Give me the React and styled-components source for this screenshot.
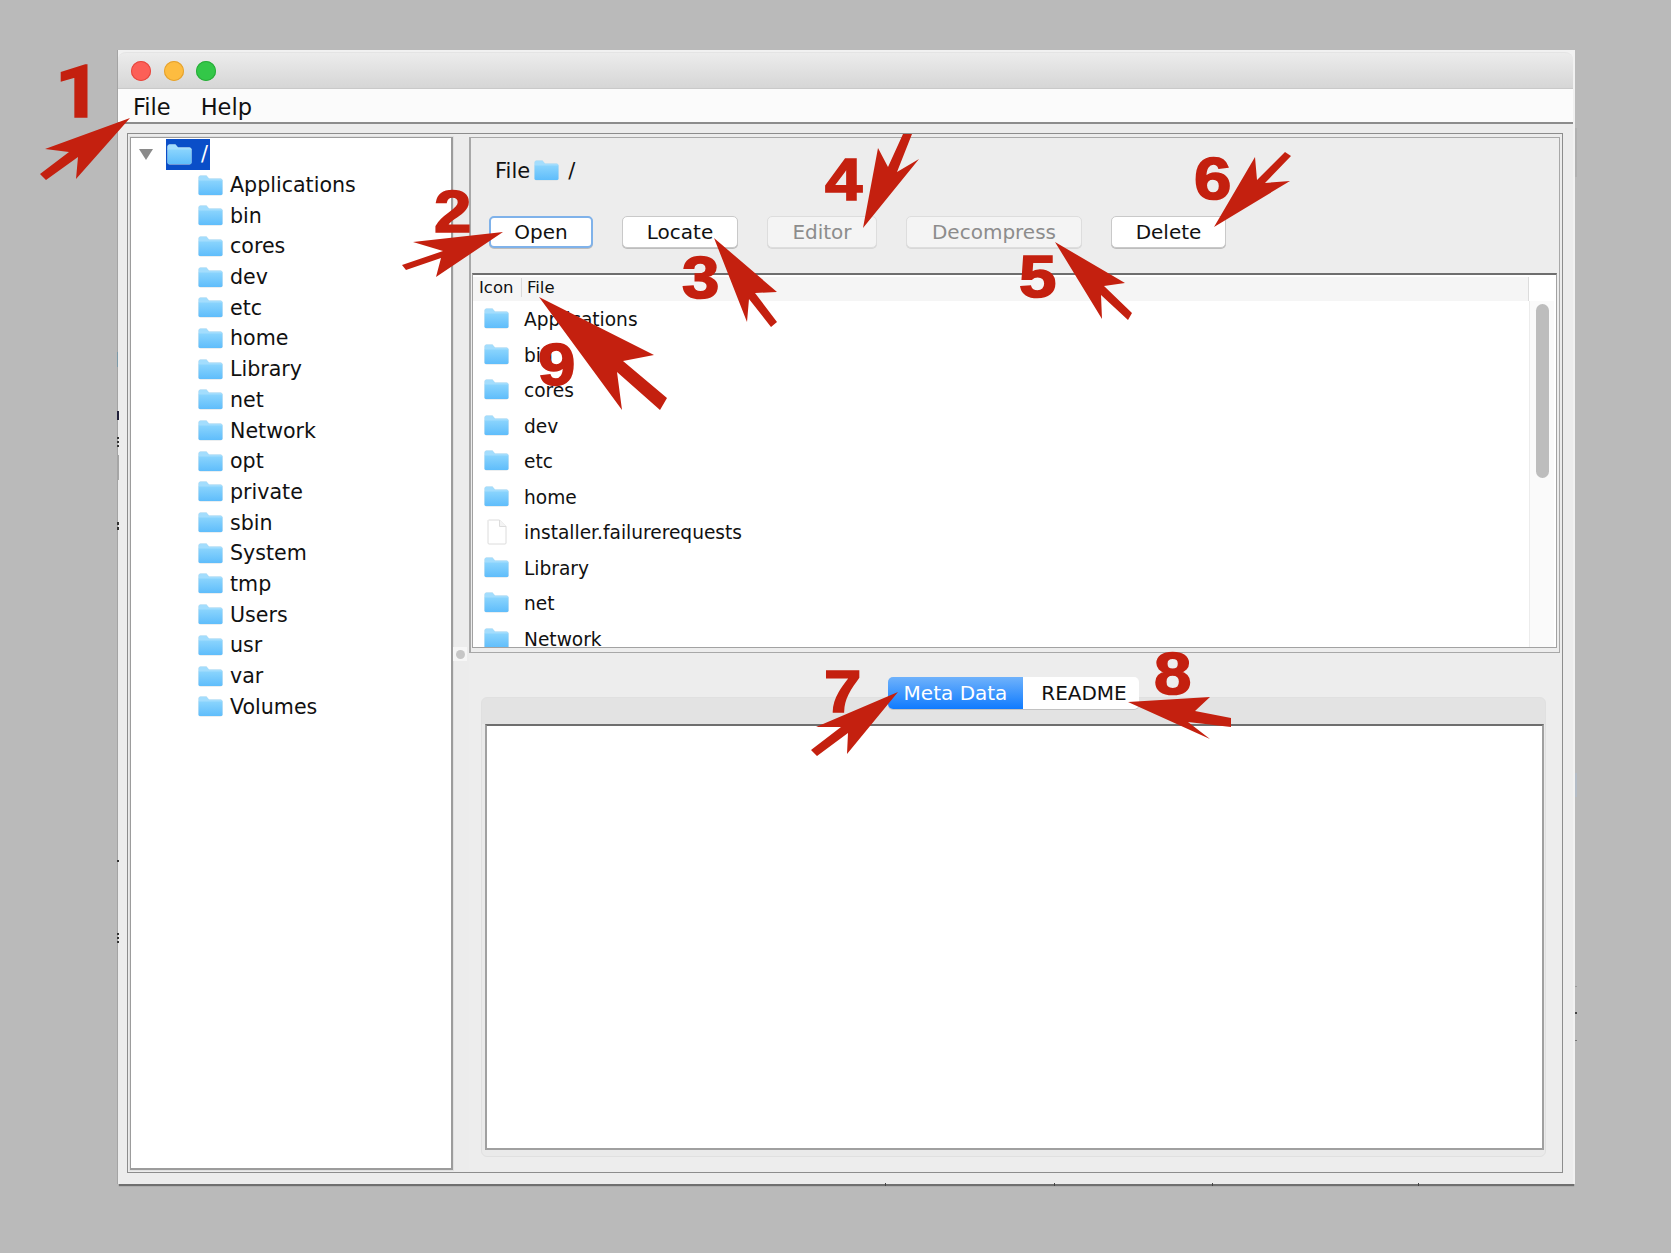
import React, { useId } from 'react'
import styled, { createGlobalStyle } from 'styled-components'

const treeItems = [
  'Applications', 'bin', 'cores', 'dev', 'etc', 'home', 'Library', 'net', 'Network',
  'opt', 'private', 'sbin', 'System', 'tmp', 'Users', 'usr', 'var', 'Volumes',
]

const fileRows = [
  { name: 'Applications', folder: true },
  { name: 'bin', folder: true },
  { name: 'cores', folder: true },
  { name: 'dev', folder: true },
  { name: 'etc', folder: true },
  { name: 'home', folder: true },
  { name: 'installer.failurerequests', folder: false },
  { name: 'Library', folder: true },
  { name: 'net', folder: true },
  { name: 'Network', folder: true },
]

const arrows = [
  '130,118 45,149 69,152 40,174 46,180 78,157 76,179',
  '503,232 413,242 443,251 402,265 406,270 441,258 436,277',
  '714,238 777,292 755,293 777,322 771,327 749,299 747,322',
  '863,228 878,148 888,167 903,134 912,134 897,172 919,159',
  '1055,242 1125,283 1104,286 1132,313 1128,320 1101,295 1102,319',
  '1214,227 1255,157 1257,180 1285,152 1291,156 1265,183 1290,181',
  '898,692 816,727 841,727 811,750 817,756 848,733 847,754',
  '1128,702 1210,697 1195,711 1231,718 1231,727 1188,722 1210,739',
  '539,297 654,355 623,361 667,398 660,410 617,372 622,410',
]

const digits = [
  { n: '1', x: 55, y: 57, size: 72, footless: true },
  { n: '2', x: 434, y: 182, size: 60 },
  { n: '3', x: 682, y: 248, size: 60 },
  { n: '4', x: 825, y: 150, size: 60 },
  { n: '5', x: 1019, y: 247, size: 60 },
  { n: '6', x: 1194, y: 149, size: 60 },
  { n: '7', x: 824, y: 662, size: 60 },
  { n: '8', x: 1154, y: 644, size: 60 },
  { n: '9', x: 538, y: 335, size: 60 },
]

// stray pixels of whatever sat behind the window when it was captured
const marks = [
  { x: 117, y: 352, w: 1, h: 15, c: '#7d9aa8' },
  { x: 117, y: 411, w: 2, h: 9, c: '#20203a' },
  { x: 117, y: 437, w: 2, h: 2, c: '#333' },
  { x: 117, y: 441, w: 2, h: 2, c: '#333' },
  { x: 117, y: 445, w: 2, h: 2, c: '#333' },
  { x: 117, y: 455, w: 2, h: 25, c: '#a6a6a6' },
  { x: 117, y: 522, w: 2, h: 3, c: '#333' },
  { x: 117, y: 527, w: 2, h: 3, c: '#333' },
  { x: 117, y: 860, w: 2, h: 2, c: '#333' },
  { x: 117, y: 933, w: 2, h: 2, c: '#333' },
  { x: 117, y: 937, w: 2, h: 2, c: '#333' },
  { x: 117, y: 941, w: 2, h: 2, c: '#333' },
  { x: 1575, y: 128, w: 2, h: 49, c: '#b0b0b0' },
  { x: 1575, y: 773, w: 2, h: 24, c: '#b4bcc6' },
  { x: 1575, y: 986, w: 2, h: 1, c: '#999' },
  { x: 1575, y: 1012, w: 2, h: 2, c: '#444' },
  { x: 1575, y: 1040, w: 2, h: 1, c: '#777' },
  { x: 885, y: 1183, w: 1, h: 3, c: '#444' },
  { x: 1054, y: 1183, w: 1, h: 3, c: '#444' },
  { x: 1212, y: 1183, w: 1, h: 3, c: '#444' },
  { x: 1418, y: 1183, w: 1, h: 3, c: '#444' },
]

const GlobalStyle = createGlobalStyle`
  html, body {
    margin: 0;
    padding: 0;
    background: #bababa;
  }
`

const Page = styled.div`
  position: relative;
  box-sizing: border-box;
  width: 1671px;
  height: 1253px;
  padding: 50px 0 0 118px;
  overflow: hidden;
  background: #bababa;
  font-family: 'DejaVu Sans', sans-serif;
  color: #111;
`

const Window = styled.div`
  box-sizing: border-box;
  display: flex;
  flex-direction: column;
  width: 1457px;
  height: 1134px;
  padding: 2px 2px 0 0;
  background: #f1f1f1;
  box-shadow: -1px 0 0 #a4a4a4, 0 3px 1px -1px #6f6f6f;
`

const TitleBar = styled.div`
  display: flex;
  align-items: center;
  gap: 12.5px;
  flex: none;
  height: 36px;
  padding-left: 13px;
  border-radius: 8px 8px 0 0;
  border-top: 1px solid #e4e4e4;
  box-sizing: border-box;
  background: linear-gradient(#ececec, #d6d6d6);
`

const Light = styled.span`
  width: 20px;
  height: 20px;
  border-radius: 50%;
  background: ${p => p.$color};
  box-shadow: inset 0 0 0 1px ${p => p.$edge};
`

const MenuBar = styled.div`
  display: flex;
  align-items: center;
  gap: 30px;
  flex: none;
  box-sizing: border-box;
  height: 36px;
  padding: 4px 0 0 15px;
  background: #fbfbfb;
  border-top: 1px solid #c9c9c9;
  border-bottom: 2px solid #8c8c8c;
`

const MenuItem = styled.span`
  font-size: 22.5px;
  line-height: 1;
`

const Content = styled.div`
  flex: 1;
  display: flex;
  min-height: 0;
  padding: 9px 10px 11px 9px;
  background: #ececec;
`

const Frame = styled.div`
  flex: 1;
  display: flex;
  box-sizing: border-box;
  padding: 3px 2px 2px 2px;
  border: 1px solid #8c8c8c;
  min-width: 0;
`

const Tree = styled.div`
  flex: none;
  box-sizing: border-box;
  width: 323px;
  padding-top: 1px;
  border: 1px solid #9c9c9c;
  border-width: 1px 2px 2px 1px;
  outline: 1px solid #e0e0e0;
  background: #fff;
`

const TreeRow = styled.div`
  display: flex;
  align-items: center;
  height: 30.7px;
  padding-left: ${p => p.$indent}px;
  font-size: 20.6px;
`

const Disclosure = styled.span`
  width: 0;
  height: 0;
  margin-right: 13px;
  border-style: solid;
  border-width: 11px 7.5px 0;
  border-color: #8a8a8a transparent transparent;
`

const SelectedNode = styled.span`
  display: flex;
  align-items: center;
  gap: 9px;
  height: 100%;
  padding: 0 2px 0 1px;
  background: #0a4ec8;
  color: #fff;
`

const NodeName = styled.span`
  margin-left: 7px;
`

const Divider = styled.div`
  flex: none;
  width: 16px;
  padding-top: 510px;
`

const Handle = styled.div`
  display: flex;
  align-items: center;
  justify-content: center;
  width: 14px;
  height: 14px;
  background: #f6f6f6;

  &::before {
    content: '';
    width: 9px;
    height: 9px;
    border-radius: 50%;
    background: #c6c6c6;
  }
`

const RightColumn = styled.div`
  flex: 1;
  display: flex;
  flex-direction: column;
  min-width: 0;
`

const UpperPane = styled.div`
  flex: none;
  box-sizing: border-box;
  height: 516px;
  padding: 4px 2px 4px 1px;
  border: 1px solid #a8a8a8;
  border-left-width: 2px;
  background: #ededed;
`

const PathRow = styled.div`
  display: flex;
  align-items: center;
  height: 57px;
  padding-left: 23px;
  font-size: 21px;
`

const PathFile = styled.span`
  margin-right: 4px;
`

const PathSlash = styled.span`
  margin-left: 9px;
`

const ButtonRow = styled.div`
  display: flex;
  gap: 29px;
  margin: 17px 0 0 17px;
`

const Button = styled.div`
  display: flex;
  align-items: center;
  justify-content: center;
  box-sizing: border-box;
  width: ${p => p.$w}px;
  height: 32px;
  border-radius: 5px;
  font-size: 20px;
  background: ${p => (p.$disabled ? '#f4f4f4' : '#fff')};
  color: ${p => (p.$disabled ? '#8c8c8c' : '#111')};
  border: ${p => (p.$focused ? '2px solid #7fb2ea' : `1px solid ${p.$disabled ? '#dddddd' : '#c9c9c9'}`)};
  box-shadow: 0 1px 0 ${p => (p.$disabled ? '#d8d8d8' : '#bdbdbd')};
`

const Table = styled.div`
  display: flex;
  box-sizing: border-box;
  height: 375px;
  margin-top: 25px;
  padding: 2px 2px 0 0;
  border: 1px solid #a2a2a2;
  border-top: 2px solid #6e6e6e;
  background: #fff;
  overflow: hidden;
`

const TableMain = styled.div`
  flex: 1;
  display: flex;
  flex-direction: column;
  min-width: 0;
`

const TableHeader = styled.div`
  display: flex;
  align-items: center;
  flex: none;
  box-sizing: border-box;
  height: 24px;
  padding-bottom: 3px;
  background: #f5f5f5;
  border-right: 1px solid #dcdcdc;
  font-size: 16.5px;
`

const HeaderCell = styled.span`
  box-sizing: border-box;
  width: ${p => p.$w}px;
  padding-left: ${p => p.$pad}px;
  border-right: ${p => (p.$divider ? '1px solid #dadada' : 'none')};
`

const Rows = styled.div`
  flex: 1;
  overflow: hidden;
`

const FileRow = styled.div`
  display: flex;
  align-items: center;
  gap: 15px;
  height: 35.5px;
  padding-left: 11px;
  font-size: 18.6px;
`

const FileName = styled.span`
  margin-top: 2px;
`

const IconSlot = styled.span`
  display: flex;
  justify-content: center;
  width: 25px;
`

const ScrollColumn = styled.div`
  flex: none;
  display: flex;
  flex-direction: column;
  width: 25px;
`

const ScrollTrack = styled.div`
  flex: 1;
  margin-top: 24px;
  padding: 3px 5px 0 6px;
  background: #fafafa;
  border-left: 1px solid #ececec;
`

const ScrollThumb = styled.div`
  width: 13px;
  height: 174px;
  border-radius: 7px;
  background: #bdbdbd;
`

const LowerPane = styled.div`
  flex: 1;
  display: flex;
  flex-direction: column;
  min-height: 0;
  padding: 24px 14px 13px 12px;
  background: #ededed;
`

const Tabs = styled.div`
  position: relative;
  display: flex;
  align-self: center;
  height: 32px;
  margin-bottom: -12px;
  border-radius: 5px;
  box-shadow: 0 1px 0 #c2c2c2;
`

const Tab = styled.div`
  display: flex;
  align-items: center;
  justify-content: center;
  box-sizing: border-box;
  width: ${p => p.$w}px;
  padding-left: ${p => (p.$active ? 0 : 6)}px;
  font-size: 20px;
  border-radius: ${p => (p.$active ? '5px 0 0 5px' : '0 5px 5px 0')};
  background: ${p => (p.$active ? 'linear-gradient(#6fb2fb, #0f7bff)' : '#fff')};
  color: ${p => (p.$active ? '#fff' : '#111')};
`

const TabPane = styled.div`
  flex: 1;
  display: flex;
  padding: 26px 1px 6px 3px;
  border: 1px solid #e0e0e0;
  border-radius: 6px;
  background: linear-gradient(#e3e3e3 26px, #eaeaea 26px);
`

const TabBody = styled.div`
  flex: 1;
  border: 2px solid #a0a0a0;
  border-top-color: #6e6e6e;
  background: #fff;
`

const Overlay = styled.svg`
  position: absolute;
  inset: 0;
  pointer-events: none;
`

const Digit = styled.span`
  position: absolute;
  left: ${p => p.$x}px;
  top: ${p => p.$y}px;
  font-family: ${p => (p.$footless ? 'Roboto' : "'Liberation Sans'")}, Arial, sans-serif;
  font-size: ${p => p.$size}px;
  font-weight: 700;
  line-height: 1;
  color: #c4200f;
  -webkit-text-stroke: 1.6px #c4200f;
  transform: scaleX(1.12);
  transform-origin: left center;
`

const Mark = styled.span`
  position: absolute;
  left: ${p => p.$x}px;
  top: ${p => p.$y}px;
  width: ${p => p.$w}px;
  height: ${p => p.$h}px;
  background: ${p => p.$c};
`

const FolderIcon = () => {
  const id = useId()
  return (
    <svg width='25' height='21' viewBox='0 0 25 21' style={{ flex: 'none' }}>
      <defs>
        <linearGradient id={id} x1='0' y1='0' x2='0' y2='1'>
          <stop offset='0' stopColor='#8ad4fd' />
          <stop offset='1' stopColor='#5fbdfb' />
        </linearGradient>
      </defs>
      <path d='M.5 2.5A2 2 0 0 1 2.5.5h6l2.5 3h11.5a2 2 0 0 1 2 2v13a2 2 0 0 1-2 2h-20a2 2 0 0 1-2-2z' fill='#d5dde2' />
      <path d='M.5 2.5A2 2 0 0 1 2.5.5h6l2.5 3h11.5a2 2 0 0 1 2 2V6H.5z' fill='#a3ddfd' />
      <path d='M.5 5.5h24v13a1.5 1.5 0 0 1-1.5 1.5H2a1.5 1.5 0 0 1-1.5-1.5z' fill={`url(#${id})`} />
    </svg>
  )
}

const FileIcon = () => (
  <svg width='20' height='26' viewBox='0 0 20 26' style={{ flex: 'none' }}>
    <path d='M1.5 1h11L19 7.5V24a1 1 0 0 1-1 1H2a1 1 0 0 1-1-1V1.5z' fill='#fff' stroke='#dcdcdc' />
    <path d='M12.5 1v6.5H19' fill='#f4f4f4' stroke='#dcdcdc' />
  </svg>
)

const App = () => (
  <Page>
    <GlobalStyle />
    <Window>
      <TitleBar>
        <Light $color='#fc5f57' $edge='#e5483f' />
        <Light $color='#fdbc40' $edge='#e3a130' />
        <Light $color='#33c748' $edge='#2aac3a' />
      </TitleBar>
      <MenuBar>
        <MenuItem>File</MenuItem>
        <MenuItem>Help</MenuItem>
      </MenuBar>
      <Content>
        <Frame>
          <Tree>
            <TreeRow $indent={8}>
              <Disclosure />
              <SelectedNode>
                <FolderIcon />
                /
              </SelectedNode>
            </TreeRow>
            {treeItems.map(name => (
              <TreeRow key={name} $indent={67}>
                <FolderIcon />
                <NodeName>{name}</NodeName>
              </TreeRow>
            ))}
          </Tree>
          <Divider>
            <Handle />
          </Divider>
          <RightColumn>
            <UpperPane>
              <PathRow>
                <PathFile>File</PathFile>
                <FolderIcon />
                <PathSlash>/</PathSlash>
              </PathRow>
              <ButtonRow>
                <Button $w={104} $focused>Open</Button>
                <Button $w={116}>Locate</Button>
                <Button $w={110} $disabled>Editor</Button>
                <Button $w={176} $disabled>Decompress</Button>
                <Button $w={115}>Delete</Button>
              </ButtonRow>
              <Table>
                <TableMain>
                  <TableHeader>
                    <HeaderCell $w={49} $pad={6} $divider>Icon</HeaderCell>
                    <HeaderCell $pad={5}>File</HeaderCell>
                  </TableHeader>
                  <Rows>
                    {fileRows.map(row => (
                      <FileRow key={row.name}>
                        <IconSlot>{row.folder ? <FolderIcon /> : <FileIcon />}</IconSlot>
                        <FileName>{row.name}</FileName>
                      </FileRow>
                    ))}
                  </Rows>
                </TableMain>
                <ScrollColumn>
                  <ScrollTrack>
                    <ScrollThumb />
                  </ScrollTrack>
                </ScrollColumn>
              </Table>
            </UpperPane>
            <LowerPane>
              <Tabs>
                <Tab $w={135} $active>Meta Data</Tab>
                <Tab $w={116}>README</Tab>
              </Tabs>
              <TabPane>
                <TabBody />
              </TabPane>
            </LowerPane>
          </RightColumn>
        </Frame>
      </Content>
    </Window>

    {marks.map(m => (
      <Mark key={`${m.x}-${m.y}`} $x={m.x} $y={m.y} $w={m.w} $h={m.h} $c={m.c} />
    ))}
    <Overlay width='1671' height='1253' viewBox='0 0 1671 1253'>
      {arrows.map(points => (
        <polygon key={points} points={points} fill='#c4200f' />
      ))}
    </Overlay>
    {digits.map(d => (
      <Digit key={d.n} $x={d.x} $y={d.y} $size={d.size} $footless={d.footless}>{d.n}</Digit>
    ))}
  </Page>
)

export default App
